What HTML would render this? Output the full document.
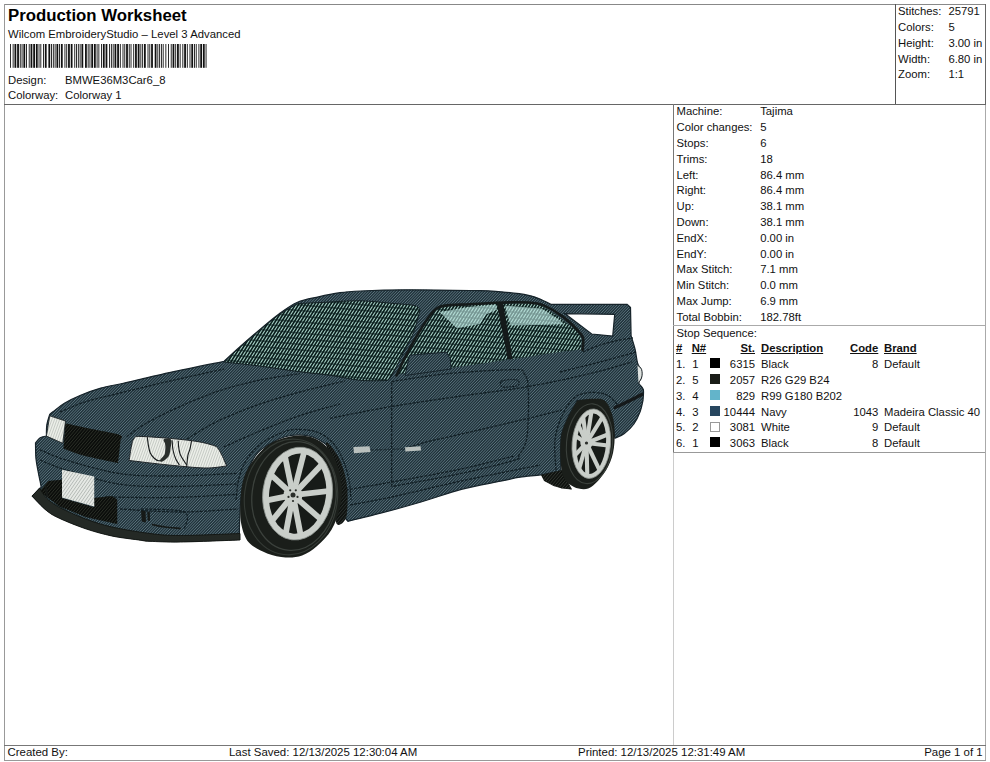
<!DOCTYPE html>
<html lang="en">
<head>
<meta charset="utf-8">
<title>Production Worksheet</title>
<style>
html,body{margin:0;padding:0;background:#fff;}
body{width:990px;height:762px;position:relative;overflow:hidden;font-family:"Liberation Sans",Arial,sans-serif;font-size:11.3px;color:#111;}
.t{position:absolute;white-space:nowrap;line-height:14px;height:14px;}
.r{text-align:right;}
.b{font-weight:bold;text-decoration:underline;}
.ln{position:absolute;background:#777;}
#title{position:absolute;left:8px;top:6.2px;font-weight:bold;font-size:16.8px;line-height:20px;white-space:nowrap;color:#000;}
.sw{position:absolute;width:10px;height:10px;}
</style>
</head>
<body>
<div class="ln" style="left:4px;top:4px;width:982px;height:1px;background:#888"></div>
<div class="ln" style="left:4px;top:4px;width:1px;height:756px;background:#999"></div>
<div class="ln" style="left:985px;top:4px;width:1px;height:100px;background:#666"></div>
<div class="ln" style="left:985px;top:104px;width:1px;height:656px;background:#aaa"></div>
<div class="ln" style="left:4px;top:104px;width:982px;height:1px;background:#666"></div>
<div class="ln" style="left:895px;top:4px;width:1px;height:100px;background:#555"></div>
<div class="ln" style="left:673px;top:104px;width:1px;height:348px;background:#777"></div>
<div class="ln" style="left:673px;top:452px;width:1px;height:293px;background:#ccc"></div>
<div class="ln" style="left:673px;top:325px;width:312px;height:1px;background:#aaa"></div>
<div class="ln" style="left:673px;top:452px;width:312px;height:1px;background:#999"></div>
<div class="ln" style="left:4px;top:745px;width:982px;height:1px;background:#777"></div>
<div class="ln" style="left:4px;top:760px;width:982px;height:1px;background:#999"></div>
<svg width="990" height="110" viewBox="0 0 990 110" style="position:absolute;left:0;top:0"><g fill="#111"><rect x="10.00" y="44" width="0.89" height="23.799999999999997"/><rect x="12.68" y="44" width="0.89" height="23.799999999999997"/><rect x="14.47" y="44" width="1.79" height="23.799999999999997"/><rect x="17.15" y="44" width="1.79" height="23.799999999999997"/><rect x="19.82" y="44" width="0.89" height="23.799999999999997"/><rect x="21.61" y="44" width="0.89" height="23.799999999999997"/><rect x="23.40" y="44" width="1.79" height="23.799999999999997"/><rect x="26.08" y="44" width="0.89" height="23.799999999999997"/><rect x="28.76" y="44" width="0.89" height="23.799999999999997"/><rect x="30.54" y="44" width="1.79" height="23.799999999999997"/><rect x="33.22" y="44" width="1.79" height="23.799999999999997"/><rect x="35.90" y="44" width="1.79" height="23.799999999999997"/><rect x="38.58" y="44" width="0.89" height="23.799999999999997"/><rect x="40.37" y="44" width="0.89" height="23.799999999999997"/><rect x="43.05" y="44" width="0.89" height="23.799999999999997"/><rect x="44.83" y="44" width="1.79" height="23.799999999999997"/><rect x="48.41" y="44" width="1.79" height="23.799999999999997"/><rect x="51.09" y="44" width="0.89" height="23.799999999999997"/><rect x="52.87" y="44" width="0.89" height="23.799999999999997"/><rect x="54.66" y="44" width="0.89" height="23.799999999999997"/><rect x="56.45" y="44" width="1.79" height="23.799999999999997"/><rect x="59.12" y="44" width="0.89" height="23.799999999999997"/><rect x="60.91" y="44" width="1.79" height="23.799999999999997"/><rect x="64.48" y="44" width="0.89" height="23.799999999999997"/><rect x="66.27" y="44" width="0.89" height="23.799999999999997"/><rect x="68.06" y="44" width="1.79" height="23.799999999999997"/><rect x="70.74" y="44" width="1.79" height="23.799999999999997"/><rect x="74.31" y="44" width="0.89" height="23.799999999999997"/><rect x="76.10" y="44" width="0.89" height="23.799999999999997"/><rect x="77.88" y="44" width="0.89" height="23.799999999999997"/><rect x="79.67" y="44" width="0.89" height="23.799999999999997"/><rect x="81.45" y="44" width="1.79" height="23.799999999999997"/><rect x="85.03" y="44" width="1.79" height="23.799999999999997"/><rect x="87.71" y="44" width="0.89" height="23.799999999999997"/><rect x="89.49" y="44" width="0.89" height="23.799999999999997"/><rect x="91.28" y="44" width="1.79" height="23.799999999999997"/><rect x="93.96" y="44" width="1.79" height="23.799999999999997"/><rect x="96.64" y="44" width="0.89" height="23.799999999999997"/><rect x="98.42" y="44" width="0.89" height="23.799999999999997"/><rect x="101.10" y="44" width="0.89" height="23.799999999999997"/><rect x="102.89" y="44" width="1.79" height="23.799999999999997"/><rect x="105.57" y="44" width="1.79" height="23.799999999999997"/><rect x="109.14" y="44" width="0.89" height="23.799999999999997"/><rect x="110.93" y="44" width="0.89" height="23.799999999999997"/><rect x="112.72" y="44" width="0.89" height="23.799999999999997"/><rect x="114.50" y="44" width="1.79" height="23.799999999999997"/><rect x="117.18" y="44" width="1.79" height="23.799999999999997"/><rect x="119.86" y="44" width="0.89" height="23.799999999999997"/><rect x="122.54" y="44" width="0.89" height="23.799999999999997"/><rect x="124.33" y="44" width="0.89" height="23.799999999999997"/><rect x="126.11" y="44" width="1.79" height="23.799999999999997"/><rect x="128.79" y="44" width="0.89" height="23.799999999999997"/><rect x="130.58" y="44" width="0.89" height="23.799999999999997"/><rect x="133.26" y="44" width="0.89" height="23.799999999999997"/><rect x="135.05" y="44" width="1.79" height="23.799999999999997"/><rect x="137.72" y="44" width="1.79" height="23.799999999999997"/><rect x="140.40" y="44" width="0.89" height="23.799999999999997"/><rect x="142.19" y="44" width="0.89" height="23.799999999999997"/><rect x="143.98" y="44" width="1.79" height="23.799999999999997"/><rect x="147.55" y="44" width="0.89" height="23.799999999999997"/><rect x="149.34" y="44" width="0.89" height="23.799999999999997"/><rect x="151.12" y="44" width="1.79" height="23.799999999999997"/><rect x="154.70" y="44" width="1.79" height="23.799999999999997"/><rect x="157.37" y="44" width="0.89" height="23.799999999999997"/><rect x="159.16" y="44" width="0.89" height="23.799999999999997"/><rect x="160.95" y="44" width="0.89" height="23.799999999999997"/><rect x="162.73" y="44" width="0.89" height="23.799999999999997"/><rect x="165.41" y="44" width="0.89" height="23.799999999999997"/><rect x="168.09" y="44" width="0.89" height="23.799999999999997"/><rect x="170.77" y="44" width="0.89" height="23.799999999999997"/><rect x="172.56" y="44" width="1.79" height="23.799999999999997"/><rect x="175.24" y="44" width="0.89" height="23.799999999999997"/><rect x="177.03" y="44" width="1.79" height="23.799999999999997"/><rect x="179.70" y="44" width="0.89" height="23.799999999999997"/><rect x="182.38" y="44" width="0.89" height="23.799999999999997"/><rect x="184.17" y="44" width="1.79" height="23.799999999999997"/><rect x="186.85" y="44" width="0.89" height="23.799999999999997"/><rect x="189.53" y="44" width="0.89" height="23.799999999999997"/><rect x="191.32" y="44" width="1.79" height="23.799999999999997"/><rect x="194.00" y="44" width="0.89" height="23.799999999999997"/><rect x="195.78" y="44" width="0.89" height="23.799999999999997"/><rect x="198.46" y="44" width="0.89" height="23.799999999999997"/><rect x="200.25" y="44" width="1.79" height="23.799999999999997"/><rect x="202.93" y="44" width="1.79" height="23.799999999999997"/><rect x="205.61" y="44" width="0.89" height="23.799999999999997"/></g></svg>
<div id="title">Production Worksheet</div>
<div class="t" style="left:8px;top:26.90px;letter-spacing:0.02px">Wilcom EmbroideryStudio – Level 3 Advanced</div>
<div class="t" style="left:8px;top:72.70px;">Design:</div>
<div class="t" style="left:65px;top:72.70px;">BMWE36M3Car6_8</div>
<div class="t" style="left:8px;top:88.10px;">Colorway:</div>
<div class="t" style="left:65px;top:88.10px;">Colorway 1</div>
<div class="t" style="left:898px;top:4.20px;">Stitches:</div>
<div class="t" style="left:948.4px;top:4.20px;">25791</div>
<div class="t" style="left:898px;top:20.00px;">Colors:</div>
<div class="t" style="left:948.4px;top:20.00px;">5</div>
<div class="t" style="left:898px;top:35.80px;">Height:</div>
<div class="t" style="left:948.4px;top:35.80px;">3.00 in</div>
<div class="t" style="left:898px;top:51.60px;">Width:</div>
<div class="t" style="left:948.4px;top:51.60px;">6.80 in</div>
<div class="t" style="left:898px;top:67.40px;">Zoom:</div>
<div class="t" style="left:948.4px;top:67.40px;">1:1</div>
<div class="t" style="left:676.5px;top:104.30px;">Machine:</div>
<div class="t" style="left:760.2px;top:104.30px;">Tajima</div>
<div class="t" style="left:676.5px;top:120.10px;">Color changes:</div>
<div class="t" style="left:760.2px;top:120.10px;">5</div>
<div class="t" style="left:676.5px;top:135.90px;">Stops:</div>
<div class="t" style="left:760.2px;top:135.90px;">6</div>
<div class="t" style="left:676.5px;top:151.70px;">Trims:</div>
<div class="t" style="left:760.2px;top:151.70px;">18</div>
<div class="t" style="left:676.5px;top:167.50px;">Left:</div>
<div class="t" style="left:760.2px;top:167.50px;">86.4 mm</div>
<div class="t" style="left:676.5px;top:183.30px;">Right:</div>
<div class="t" style="left:760.2px;top:183.30px;">86.4 mm</div>
<div class="t" style="left:676.5px;top:199.10px;">Up:</div>
<div class="t" style="left:760.2px;top:199.10px;">38.1 mm</div>
<div class="t" style="left:676.5px;top:214.90px;">Down:</div>
<div class="t" style="left:760.2px;top:214.90px;">38.1 mm</div>
<div class="t" style="left:676.5px;top:230.70px;">EndX:</div>
<div class="t" style="left:760.2px;top:230.70px;">0.00 in</div>
<div class="t" style="left:676.5px;top:246.50px;">EndY:</div>
<div class="t" style="left:760.2px;top:246.50px;">0.00 in</div>
<div class="t" style="left:676.5px;top:262.30px;">Max Stitch:</div>
<div class="t" style="left:760.2px;top:262.30px;">7.1 mm</div>
<div class="t" style="left:676.5px;top:278.10px;">Min Stitch:</div>
<div class="t" style="left:760.2px;top:278.10px;">0.0 mm</div>
<div class="t" style="left:676.5px;top:293.90px;">Max Jump:</div>
<div class="t" style="left:760.2px;top:293.90px;">6.9 mm</div>
<div class="t" style="left:676.5px;top:309.70px;">Total Bobbin:</div>
<div class="t" style="left:760.2px;top:309.70px;">182.78ft</div>
<div class="t" style="left:676.5px;top:325.50px;">Stop Sequence:</div>
<div class="t b" style="left:676px;top:341.30px;">#</div>
<div class="t b" style="left:691.7px;top:341.30px;">N#</div>
<div class="t r b" style="right:235px;top:341.30px;">St.</div>
<div class="t b" style="left:761px;top:341.30px;">Description</div>
<div class="t r b" style="right:111.70000000000005px;top:341.30px;">Code</div>
<div class="t b" style="left:884px;top:341.30px;">Brand</div>
<div class="t" style="left:676px;top:357.10px;">1.</div>
<div class="t" style="left:692.3px;top:357.10px;">1</div>
<div class="sw" style="left:709.5px;top:358.40px;background:#000000;"></div>
<div class="t r" style="right:235px;top:357.10px;">6315</div>
<div class="t" style="left:761px;top:357.10px;">Black</div>
<div class="t r" style="right:111.70000000000005px;top:357.10px;">8</div>
<div class="t" style="left:884px;top:357.10px;">Default</div>
<div class="t" style="left:676px;top:372.90px;">2.</div>
<div class="t" style="left:692.3px;top:372.90px;">5</div>
<div class="sw" style="left:709.5px;top:374.20px;background:#1a1d18;"></div>
<div class="t r" style="right:235px;top:372.90px;">2057</div>
<div class="t" style="left:761px;top:372.90px;">R26 G29 B24</div>
<div class="t" style="left:676px;top:388.70px;">3.</div>
<div class="t" style="left:692.3px;top:388.70px;">4</div>
<div class="sw" style="left:709.5px;top:390.00px;background:#63b4ca;"></div>
<div class="t r" style="right:235px;top:388.70px;">829</div>
<div class="t" style="left:761px;top:388.70px;">R99 G180 B202</div>
<div class="t" style="left:676px;top:404.50px;">4.</div>
<div class="t" style="left:692.3px;top:404.50px;">3</div>
<div class="sw" style="left:709.5px;top:405.80px;background:#27465f;"></div>
<div class="t r" style="right:235px;top:404.50px;">10444</div>
<div class="t" style="left:761px;top:404.50px;">Navy</div>
<div class="t r" style="right:111.70000000000005px;top:404.50px;">1043</div>
<div class="t" style="left:884px;top:404.50px;">Madeira Classic 40</div>
<div class="t" style="left:676px;top:420.30px;">5.</div>
<div class="t" style="left:692.3px;top:420.30px;">2</div>
<div class="sw" style="left:709.5px;top:421.60px;background:#ffffff;border:1px solid #999;box-sizing:border-box;"></div>
<div class="t r" style="right:235px;top:420.30px;">3081</div>
<div class="t" style="left:761px;top:420.30px;">White</div>
<div class="t r" style="right:111.70000000000005px;top:420.30px;">9</div>
<div class="t" style="left:884px;top:420.30px;">Default</div>
<div class="t" style="left:676px;top:436.10px;">6.</div>
<div class="t" style="left:692.3px;top:436.10px;">1</div>
<div class="sw" style="left:709.5px;top:437.40px;background:#000000;"></div>
<div class="t r" style="right:235px;top:436.10px;">3063</div>
<div class="t" style="left:761px;top:436.10px;">Black</div>
<div class="t r" style="right:111.70000000000005px;top:436.10px;">8</div>
<div class="t" style="left:884px;top:436.10px;">Default</div>
<div class="t" style="left:7.5px;top:745.10px;font-size:11.45px">Created By:</div>
<div class="t" style="left:229px;top:745.10px;font-size:11.45px">Last Saved: 12/13/2025 12:30:04 AM</div>
<div class="t" style="left:578px;top:745.10px;font-size:11.45px">Printed: 12/13/2025 12:31:49 AM</div>
<div class="t r" style="right:7.2999999999999545px;top:745.10px;font-size:11.45px">Page 1 of 1</div>
<svg id="car" width="990" height="762" viewBox="0 0 990 762" style="position:absolute;left:0;top:0">
<g id="body"><clipPath id="c1"><path d="M46.4,436.0C46.5,434.2 46.2,428.6 46.8,425.0C47.3,421.4 49.2,416.2 49.7,414.5C50.3,414.0 50.8,413.4 53.3,411.5C55.8,409.6 59.9,405.9 64.4,403.2C69.0,400.5 74.5,397.7 80.6,395.2C86.7,392.7 94.2,390.0 100.8,388.1C107.4,386.2 114.1,385.3 120.0,384.0C125.9,382.7 127.6,382.2 136.0,380.3C144.4,378.4 155.8,375.5 170.5,372.3C185.2,369.1 215.1,363.2 224.0,361.4C226.6,359.0 233.8,352.2 239.7,347.0C245.6,341.8 252.8,335.5 259.4,330.0C265.9,324.5 272.6,318.6 279.0,314.0C285.4,309.4 290.9,305.2 297.5,302.3C304.1,299.4 311.4,298.4 318.5,296.8C325.6,295.2 333.0,293.7 340.0,292.7C347.0,291.7 349.7,291.5 360.6,291.0C371.6,290.5 387.5,289.9 405.7,289.8C423.9,289.7 455.0,290.2 470.0,290.5C485.0,290.8 485.9,290.5 495.7,291.3C505.4,292.1 520.6,293.8 528.5,295.3C536.4,296.8 539.2,299.0 543.0,300.5C546.8,302.0 549.7,303.8 551.0,304.4C563.7,304.4 614.5,304.4 627.2,304.4C627.8,304.9 630.0,307.0 630.5,307.5C630.6,312.2 631.0,331.2 631.1,336.0C631.8,338.2 633.9,344.4 635.0,349.0C636.1,353.6 636.7,360.1 637.7,363.5C638.7,366.9 640.4,367.1 641.0,369.5C641.6,371.9 641.6,375.8 641.2,378.0C640.8,380.2 638.4,381.1 638.8,383.0C639.1,384.9 642.6,386.5 643.3,389.4C644.0,392.3 643.0,398.6 643.0,400.5C642.5,402.3 641.7,407.6 640.2,411.5C638.7,415.4 636.5,420.3 633.9,424.0C631.3,427.7 627.5,431.1 624.4,433.5C621.2,435.9 616.6,437.4 615.0,438.2C614.4,435.5 612.1,424.7 611.5,422.0C610.9,419.8 609.6,412.2 608.0,409.0C606.4,405.8 604.5,404.0 602.0,402.5C599.5,401.0 597.1,400.3 593.0,400.0C588.9,399.7 579.8,400.4 577.2,400.5C576.9,401.0 577.2,400.7 575.6,403.6C574.0,406.5 570.1,412.6 567.8,417.8C565.4,423.0 562.7,428.2 561.5,435.0C560.3,441.8 560.8,452.7 560.7,458.7C560.6,464.7 561.0,468.9 561.0,471.0C557.7,471.6 547.8,473.8 541.0,474.8C534.2,475.8 526.8,476.1 520.0,477.2C513.2,478.3 510.2,479.2 500.4,481.2C490.6,483.2 474.6,485.8 461.4,489.3C448.2,492.8 434.5,498.0 421.0,502.0C407.5,506.0 392.8,510.0 380.6,513.2C368.4,516.4 353.4,519.9 348.0,521.3C347.5,520.7 345.3,518.3 344.8,517.7C345.1,514.5 346.7,504.8 346.6,498.5C346.6,492.2 345.7,486.1 344.5,480.0C343.3,473.9 341.2,466.4 339.3,461.7C337.4,456.9 335.5,454.6 333.0,451.5C330.5,448.4 327.6,445.4 324.1,443.0C320.6,440.6 316.3,438.2 312.0,436.8C307.7,435.4 302.9,434.8 298.4,434.8C293.9,434.8 289.6,435.4 285.0,436.8C280.4,438.2 275.4,440.6 270.9,443.2C266.4,445.8 261.7,448.5 258.0,452.5C254.3,456.5 251.3,462.1 248.9,467.2C246.5,472.3 244.9,477.2 243.5,483.0C242.1,488.8 241.3,495.0 240.6,502.0C239.9,509.0 239.7,518.8 239.5,525.0C239.3,531.2 239.5,537.1 239.5,539.5C229.7,539.8 195.5,541.3 180.6,541.5C165.7,541.7 157.1,541.1 150.0,540.8C142.9,540.4 144.5,540.3 138.2,539.4C131.8,538.5 120.7,537.4 111.9,535.5C103.2,533.6 94.5,531.2 85.7,528.3C77.0,525.3 66.0,520.9 59.4,517.8C52.8,514.7 50.8,513.5 46.3,509.9C41.8,506.3 34.8,498.4 32.5,496.1C33.7,494.8 38.5,489.5 39.7,488.2C39.9,487.9 41.2,488.8 41.0,486.3C40.8,483.8 39.2,477.6 38.4,473.0C37.6,468.4 36.5,464.0 36.0,459.0C35.5,454.0 35.6,445.7 35.5,443.0C36.3,442.1 38.4,439.0 40.2,437.8C42.0,436.6 45.4,436.3 46.4,436.0Z"/></clipPath><path d="M46.4,436.0C46.5,434.2 46.2,428.6 46.8,425.0C47.3,421.4 49.2,416.2 49.7,414.5C50.3,414.0 50.8,413.4 53.3,411.5C55.8,409.6 59.9,405.9 64.4,403.2C69.0,400.5 74.5,397.7 80.6,395.2C86.7,392.7 94.2,390.0 100.8,388.1C107.4,386.2 114.1,385.3 120.0,384.0C125.9,382.7 127.6,382.2 136.0,380.3C144.4,378.4 155.8,375.5 170.5,372.3C185.2,369.1 215.1,363.2 224.0,361.4C226.6,359.0 233.8,352.2 239.7,347.0C245.6,341.8 252.8,335.5 259.4,330.0C265.9,324.5 272.6,318.6 279.0,314.0C285.4,309.4 290.9,305.2 297.5,302.3C304.1,299.4 311.4,298.4 318.5,296.8C325.6,295.2 333.0,293.7 340.0,292.7C347.0,291.7 349.7,291.5 360.6,291.0C371.6,290.5 387.5,289.9 405.7,289.8C423.9,289.7 455.0,290.2 470.0,290.5C485.0,290.8 485.9,290.5 495.7,291.3C505.4,292.1 520.6,293.8 528.5,295.3C536.4,296.8 539.2,299.0 543.0,300.5C546.8,302.0 549.7,303.8 551.0,304.4C563.7,304.4 614.5,304.4 627.2,304.4C627.8,304.9 630.0,307.0 630.5,307.5C630.6,312.2 631.0,331.2 631.1,336.0C631.8,338.2 633.9,344.4 635.0,349.0C636.1,353.6 636.7,360.1 637.7,363.5C638.7,366.9 640.4,367.1 641.0,369.5C641.6,371.9 641.6,375.8 641.2,378.0C640.8,380.2 638.4,381.1 638.8,383.0C639.1,384.9 642.6,386.5 643.3,389.4C644.0,392.3 643.0,398.6 643.0,400.5C642.5,402.3 641.7,407.6 640.2,411.5C638.7,415.4 636.5,420.3 633.9,424.0C631.3,427.7 627.5,431.1 624.4,433.5C621.2,435.9 616.6,437.4 615.0,438.2C614.4,435.5 612.1,424.7 611.5,422.0C610.9,419.8 609.6,412.2 608.0,409.0C606.4,405.8 604.5,404.0 602.0,402.5C599.5,401.0 597.1,400.3 593.0,400.0C588.9,399.7 579.8,400.4 577.2,400.5C576.9,401.0 577.2,400.7 575.6,403.6C574.0,406.5 570.1,412.6 567.8,417.8C565.4,423.0 562.7,428.2 561.5,435.0C560.3,441.8 560.8,452.7 560.7,458.7C560.6,464.7 561.0,468.9 561.0,471.0C557.7,471.6 547.8,473.8 541.0,474.8C534.2,475.8 526.8,476.1 520.0,477.2C513.2,478.3 510.2,479.2 500.4,481.2C490.6,483.2 474.6,485.8 461.4,489.3C448.2,492.8 434.5,498.0 421.0,502.0C407.5,506.0 392.8,510.0 380.6,513.2C368.4,516.4 353.4,519.9 348.0,521.3C347.5,520.7 345.3,518.3 344.8,517.7C345.1,514.5 346.7,504.8 346.6,498.5C346.6,492.2 345.7,486.1 344.5,480.0C343.3,473.9 341.2,466.4 339.3,461.7C337.4,456.9 335.5,454.6 333.0,451.5C330.5,448.4 327.6,445.4 324.1,443.0C320.6,440.6 316.3,438.2 312.0,436.8C307.7,435.4 302.9,434.8 298.4,434.8C293.9,434.8 289.6,435.4 285.0,436.8C280.4,438.2 275.4,440.6 270.9,443.2C266.4,445.8 261.7,448.5 258.0,452.5C254.3,456.5 251.3,462.1 248.9,467.2C246.5,472.3 244.9,477.2 243.5,483.0C242.1,488.8 241.3,495.0 240.6,502.0C239.9,509.0 239.7,518.8 239.5,525.0C239.3,531.2 239.5,537.1 239.5,539.5C229.7,539.8 195.5,541.3 180.6,541.5C165.7,541.7 157.1,541.1 150.0,540.8C142.9,540.4 144.5,540.3 138.2,539.4C131.8,538.5 120.7,537.4 111.9,535.5C103.2,533.6 94.5,531.2 85.7,528.3C77.0,525.3 66.0,520.9 59.4,517.8C52.8,514.7 50.8,513.5 46.3,509.9C41.8,506.3 34.8,498.4 32.5,496.1C33.7,494.8 38.5,489.5 39.7,488.2C39.9,487.9 41.2,488.8 41.0,486.3C40.8,483.8 39.2,477.6 38.4,473.0C37.6,468.4 36.5,464.0 36.0,459.0C35.5,454.0 35.6,445.7 35.5,443.0C36.3,442.1 38.4,439.0 40.2,437.8C42.0,436.6 45.4,436.3 46.4,436.0Z" fill="#21333b"/><g clip-path="url(#c1)"><path d="M30.5,290.6L33.2,287.8M30.5,293.5L36.0,287.8M30.5,296.3L38.8,287.8M30.5,299.2L41.5,287.8M30.5,302.1L44.3,287.8M30.5,305.0L47.1,287.8M30.5,307.9L49.9,287.8M30.5,310.7L52.7,287.8M30.5,313.6L55.4,287.8M30.5,316.5L58.2,287.8M30.5,319.4L61.0,287.8M30.5,322.3L63.8,287.8M30.5,325.1L66.6,287.8M30.5,328.0L69.3,287.8M30.5,330.9L72.1,287.8M30.5,333.8L74.9,287.8M30.5,336.7L77.7,287.8M30.5,339.5L80.5,287.8M30.5,342.4L83.2,287.8M30.5,345.3L86.0,287.8M30.5,348.2L88.8,287.8M30.5,351.0L91.6,287.8M30.5,353.9L94.4,287.8M30.5,356.8L97.1,287.8M30.5,359.7L99.9,287.8M30.5,362.6L102.7,287.8M30.5,365.4L105.5,287.8M30.5,368.3L108.3,287.8M30.5,371.2L111.0,287.8M30.5,374.1L113.8,287.8M30.5,377.0L116.6,287.8M30.5,379.8L119.4,287.8M30.5,382.7L122.2,287.8M30.5,385.6L124.9,287.8M30.5,388.5L127.7,287.8M30.5,391.4L130.5,287.8M30.5,394.2L133.3,287.8M30.5,397.1L136.1,287.8M30.5,400.0L138.8,287.8M30.5,402.9L141.6,287.8M30.5,405.8L144.4,287.8M30.5,408.6L147.2,287.8M30.5,411.5L150.0,287.8M30.5,414.4L152.7,287.8M30.5,417.3L155.5,287.8M30.5,420.1L158.3,287.8M30.5,423.0L161.1,287.8M30.5,425.9L163.9,287.8M30.5,428.8L166.6,287.8M30.5,431.7L169.4,287.8M30.5,434.5L172.2,287.8M30.5,437.4L175.0,287.8M30.5,440.3L177.8,287.8M30.5,443.2L180.6,287.8M30.5,446.1L183.3,287.8M30.5,448.9L186.1,287.8M30.5,451.8L188.9,287.8M30.5,454.7L191.7,287.8M30.5,457.6L194.5,287.8M30.5,460.5L197.2,287.8M30.5,463.3L200.0,287.8M30.5,466.2L202.8,287.8M30.5,469.1L205.6,287.8M30.5,472.0L208.4,287.8M30.5,474.9L211.1,287.8M30.5,477.7L213.9,287.8M30.5,480.6L216.7,287.8M30.5,483.5L219.5,287.8M30.5,486.4L222.3,287.8M30.5,489.2L225.0,287.8M30.5,492.1L227.8,287.8M30.5,495.0L230.6,287.8M30.5,497.9L233.4,287.8M30.5,500.8L236.2,287.8M30.5,503.6L238.9,287.8M30.5,506.5L241.7,287.8M30.5,509.4L244.5,287.8M30.5,512.3L247.3,287.8M30.5,515.2L250.1,287.8M30.5,518.0L252.8,287.8M30.5,520.9L255.6,287.8M30.5,523.8L258.4,287.8M30.5,526.7L261.2,287.8M30.5,529.6L264.0,287.8M30.5,532.4L266.7,287.8M30.5,535.3L269.5,287.8M30.5,538.2L272.3,287.8M30.5,541.1L275.1,287.8M30.9,543.5L277.9,287.8M33.7,543.5L280.6,287.8M36.5,543.5L283.4,287.8M39.3,543.5L286.2,287.8M42.1,543.5L289.0,287.8M44.8,543.5L291.8,287.8M47.6,543.5L294.5,287.8M50.4,543.5L297.3,287.8M53.2,543.5L300.1,287.8M56.0,543.5L302.9,287.8M58.7,543.5L305.7,287.8M61.5,543.5L308.4,287.8M64.3,543.5L311.2,287.8M67.1,543.5L314.0,287.8M69.9,543.5L316.8,287.8M72.6,543.5L319.6,287.8M75.4,543.5L322.3,287.8M78.2,543.5L325.1,287.8M81.0,543.5L327.9,287.8M83.8,543.5L330.7,287.8M86.5,543.5L333.5,287.8M89.3,543.5L336.2,287.8M92.1,543.5L339.0,287.8M94.9,543.5L341.8,287.8M97.7,543.5L344.6,287.8M100.4,543.5L347.4,287.8M103.2,543.5L350.2,287.8M106.0,543.5L352.9,287.8M108.8,543.5L355.7,287.8M111.6,543.5L358.5,287.8M114.3,543.5L361.3,287.8M117.1,543.5L364.1,287.8M119.9,543.5L366.8,287.8M122.7,543.5L369.6,287.8M125.5,543.5L372.4,287.8M128.2,543.5L375.2,287.8M131.0,543.5L378.0,287.8M133.8,543.5L380.7,287.8M136.6,543.5L383.5,287.8M139.4,543.5L386.3,287.8M142.1,543.5L389.1,287.8M144.9,543.5L391.9,287.8M147.7,543.5L394.6,287.8M150.5,543.5L397.4,287.8M153.3,543.5L400.2,287.8M156.0,543.5L403.0,287.8M158.8,543.5L405.8,287.8M161.6,543.5L408.5,287.8M164.4,543.5L411.3,287.8M167.2,543.5L414.1,287.8M170.0,543.5L416.9,287.8M172.7,543.5L419.7,287.8M175.5,543.5L422.4,287.8M178.3,543.5L425.2,287.8M181.1,543.5L428.0,287.8M183.9,543.5L430.8,287.8M186.6,543.5L433.6,287.8M189.4,543.5L436.3,287.8M192.2,543.5L439.1,287.8M195.0,543.5L441.9,287.8M197.8,543.5L444.7,287.8M200.5,543.5L447.5,287.8M203.3,543.5L450.2,287.8M206.1,543.5L453.0,287.8M208.9,543.5L455.8,287.8M211.7,543.5L458.6,287.8M214.4,543.5L461.4,287.8M217.2,543.5L464.1,287.8M220.0,543.5L466.9,287.8M222.8,543.5L469.7,287.8M225.6,543.5L472.5,287.8M228.3,543.5L475.3,287.8M231.1,543.5L478.0,287.8M233.9,543.5L480.8,287.8M236.7,543.5L483.6,287.8M239.5,543.5L486.4,287.8M242.2,543.5L489.2,287.8M245.0,543.5L491.9,287.8M247.8,543.5L494.7,287.8M250.6,543.5L497.5,287.8M253.4,543.5L500.3,287.8M256.1,543.5L503.1,287.8M258.9,543.5L505.8,287.8M261.7,543.5L508.6,287.8M264.5,543.5L511.4,287.8M267.3,543.5L514.2,287.8M270.0,543.5L517.0,287.8M272.8,543.5L519.8,287.8M275.6,543.5L522.5,287.8M278.4,543.5L525.3,287.8M281.2,543.5L528.1,287.8M283.9,543.5L530.9,287.8M286.7,543.5L533.7,287.8M289.5,543.5L536.4,287.8M292.3,543.5L539.2,287.8M295.1,543.5L542.0,287.8M297.8,543.5L544.8,287.8M300.6,543.5L547.6,287.8M303.4,543.5L550.3,287.8M306.2,543.5L553.1,287.8M309.0,543.5L555.9,287.8M311.7,543.5L558.7,287.8M314.5,543.5L561.5,287.8M317.3,543.5L564.2,287.8M320.1,543.5L567.0,287.8M322.9,543.5L569.8,287.8M325.6,543.5L572.6,287.8M328.4,543.5L575.4,287.8M331.2,543.5L578.1,287.8M334.0,543.5L580.9,287.8M336.8,543.5L583.7,287.8M339.6,543.5L586.5,287.8M342.3,543.5L589.3,287.8M345.1,543.5L592.0,287.8M347.9,543.5L594.8,287.8M350.7,543.5L597.6,287.8M353.5,543.5L600.4,287.8M356.2,543.5L603.2,287.8M359.0,543.5L605.9,287.8M361.8,543.5L608.7,287.8M364.6,543.5L611.5,287.8M367.4,543.5L614.3,287.8M370.1,543.5L617.1,287.8M372.9,543.5L619.8,287.8M375.7,543.5L622.6,287.8M378.5,543.5L625.4,287.8M381.3,543.5L628.2,287.8M384.0,543.5L631.0,287.8M386.8,543.5L633.7,287.8M389.6,543.5L636.5,287.8M392.4,543.5L639.3,287.8M395.2,543.5L642.1,287.8M397.9,543.5L644.9,287.8M400.7,543.5L645.3,290.2M403.5,543.5L645.3,293.1M406.3,543.5L645.3,296.0M409.1,543.5L645.3,298.9M411.8,543.5L645.3,301.7M414.6,543.5L645.3,304.6M417.4,543.5L645.3,307.5M420.2,543.5L645.3,310.4M423.0,543.5L645.3,313.3M425.7,543.5L645.3,316.1M428.5,543.5L645.3,319.0M431.3,543.5L645.3,321.9M434.1,543.5L645.3,324.8M436.9,543.5L645.3,327.7M439.6,543.5L645.3,330.5M442.4,543.5L645.3,333.4M445.2,543.5L645.3,336.3M448.0,543.5L645.3,339.2M450.8,543.5L645.3,342.1M453.5,543.5L645.3,344.9M456.3,543.5L645.3,347.8M459.1,543.5L645.3,350.7M461.9,543.5L645.3,353.6M464.7,543.5L645.3,356.4M467.4,543.5L645.3,359.3M470.2,543.5L645.3,362.2M473.0,543.5L645.3,365.1M475.8,543.5L645.3,368.0M478.6,543.5L645.3,370.8M481.3,543.5L645.3,373.7M484.1,543.5L645.3,376.6M486.9,543.5L645.3,379.5M489.7,543.5L645.3,382.4M492.5,543.5L645.3,385.2M495.2,543.5L645.3,388.1M498.0,543.5L645.3,391.0M500.8,543.5L645.3,393.9M503.6,543.5L645.3,396.8M506.4,543.5L645.3,399.6M509.2,543.5L645.3,402.5M511.9,543.5L645.3,405.4M514.7,543.5L645.3,408.3M517.5,543.5L645.3,411.2M520.3,543.5L645.3,414.0M523.1,543.5L645.3,416.9M525.8,543.5L645.3,419.8M528.6,543.5L645.3,422.7M531.4,543.5L645.3,425.5M534.2,543.5L645.3,428.4M537.0,543.5L645.3,431.3M539.7,543.5L645.3,434.2M542.5,543.5L645.3,437.1M545.3,543.5L645.3,439.9M548.1,543.5L645.3,442.8M550.9,543.5L645.3,445.7M553.6,543.5L645.3,448.6M556.4,543.5L645.3,451.5M559.2,543.5L645.3,454.3M562.0,543.5L645.3,457.2M564.8,543.5L645.3,460.1M567.5,543.5L645.3,463.0M570.3,543.5L645.3,465.9M573.1,543.5L645.3,468.7M575.9,543.5L645.3,471.6M578.7,543.5L645.3,474.5M581.4,543.5L645.3,477.4M584.2,543.5L645.3,480.3M587.0,543.5L645.3,483.1M589.8,543.5L645.3,486.0M592.6,543.5L645.3,488.9M595.3,543.5L645.3,491.8M598.1,543.5L645.3,494.6M600.9,543.5L645.3,497.5M603.7,543.5L645.3,500.4M606.5,543.5L645.3,503.3M609.2,543.5L645.3,506.2M612.0,543.5L645.3,509.0M614.8,543.5L645.3,511.9M617.6,543.5L645.3,514.8M620.4,543.5L645.3,517.7M623.1,543.5L645.3,520.6M625.9,543.5L645.3,523.4M628.7,543.5L645.3,526.3M631.5,543.5L645.3,529.2M634.3,543.5L645.3,532.1M637.0,543.5L645.3,535.0M639.8,543.5L645.3,537.8M642.6,543.5L645.3,540.7" fill="none" stroke="#5b737d" stroke-width="1.0" opacity="1"/></g><path d="M46.4,436.0C46.5,434.2 46.2,428.6 46.8,425.0C47.3,421.4 49.2,416.2 49.7,414.5C50.3,414.0 50.8,413.4 53.3,411.5C55.8,409.6 59.9,405.9 64.4,403.2C69.0,400.5 74.5,397.7 80.6,395.2C86.7,392.7 94.2,390.0 100.8,388.1C107.4,386.2 114.1,385.3 120.0,384.0C125.9,382.7 127.6,382.2 136.0,380.3C144.4,378.4 155.8,375.5 170.5,372.3C185.2,369.1 215.1,363.2 224.0,361.4C226.6,359.0 233.8,352.2 239.7,347.0C245.6,341.8 252.8,335.5 259.4,330.0C265.9,324.5 272.6,318.6 279.0,314.0C285.4,309.4 290.9,305.2 297.5,302.3C304.1,299.4 311.4,298.4 318.5,296.8C325.6,295.2 333.0,293.7 340.0,292.7C347.0,291.7 349.7,291.5 360.6,291.0C371.6,290.5 387.5,289.9 405.7,289.8C423.9,289.7 455.0,290.2 470.0,290.5C485.0,290.8 485.9,290.5 495.7,291.3C505.4,292.1 520.6,293.8 528.5,295.3C536.4,296.8 539.2,299.0 543.0,300.5C546.8,302.0 549.7,303.8 551.0,304.4C563.7,304.4 614.5,304.4 627.2,304.4C627.8,304.9 630.0,307.0 630.5,307.5C630.6,312.2 631.0,331.2 631.1,336.0C631.8,338.2 633.9,344.4 635.0,349.0C636.1,353.6 636.7,360.1 637.7,363.5C638.7,366.9 640.4,367.1 641.0,369.5C641.6,371.9 641.6,375.8 641.2,378.0C640.8,380.2 638.4,381.1 638.8,383.0C639.1,384.9 642.6,386.5 643.3,389.4C644.0,392.3 643.0,398.6 643.0,400.5C642.5,402.3 641.7,407.6 640.2,411.5C638.7,415.4 636.5,420.3 633.9,424.0C631.3,427.7 627.5,431.1 624.4,433.5C621.2,435.9 616.6,437.4 615.0,438.2C614.4,435.5 612.1,424.7 611.5,422.0C610.9,419.8 609.6,412.2 608.0,409.0C606.4,405.8 604.5,404.0 602.0,402.5C599.5,401.0 597.1,400.3 593.0,400.0C588.9,399.7 579.8,400.4 577.2,400.5C576.9,401.0 577.2,400.7 575.6,403.6C574.0,406.5 570.1,412.6 567.8,417.8C565.4,423.0 562.7,428.2 561.5,435.0C560.3,441.8 560.8,452.7 560.7,458.7C560.6,464.7 561.0,468.9 561.0,471.0C557.7,471.6 547.8,473.8 541.0,474.8C534.2,475.8 526.8,476.1 520.0,477.2C513.2,478.3 510.2,479.2 500.4,481.2C490.6,483.2 474.6,485.8 461.4,489.3C448.2,492.8 434.5,498.0 421.0,502.0C407.5,506.0 392.8,510.0 380.6,513.2C368.4,516.4 353.4,519.9 348.0,521.3C347.5,520.7 345.3,518.3 344.8,517.7C345.1,514.5 346.7,504.8 346.6,498.5C346.6,492.2 345.7,486.1 344.5,480.0C343.3,473.9 341.2,466.4 339.3,461.7C337.4,456.9 335.5,454.6 333.0,451.5C330.5,448.4 327.6,445.4 324.1,443.0C320.6,440.6 316.3,438.2 312.0,436.8C307.7,435.4 302.9,434.8 298.4,434.8C293.9,434.8 289.6,435.4 285.0,436.8C280.4,438.2 275.4,440.6 270.9,443.2C266.4,445.8 261.7,448.5 258.0,452.5C254.3,456.5 251.3,462.1 248.9,467.2C246.5,472.3 244.9,477.2 243.5,483.0C242.1,488.8 241.3,495.0 240.6,502.0C239.9,509.0 239.7,518.8 239.5,525.0C239.3,531.2 239.5,537.1 239.5,539.5C229.7,539.8 195.5,541.3 180.6,541.5C165.7,541.7 157.1,541.1 150.0,540.8C142.9,540.4 144.5,540.3 138.2,539.4C131.8,538.5 120.7,537.4 111.9,535.5C103.2,533.6 94.5,531.2 85.7,528.3C77.0,525.3 66.0,520.9 59.4,517.8C52.8,514.7 50.8,513.5 46.3,509.9C41.8,506.3 34.8,498.4 32.5,496.1C33.7,494.8 38.5,489.5 39.7,488.2C39.9,487.9 41.2,488.8 41.0,486.3C40.8,483.8 39.2,477.6 38.4,473.0C37.6,468.4 36.5,464.0 36.0,459.0C35.5,454.0 35.6,445.7 35.5,443.0C36.3,442.1 38.4,439.0 40.2,437.8C42.0,436.6 45.4,436.3 46.4,436.0Z" fill="none" stroke="#16232a" stroke-width="1.2"/></g>
<path d="M564.8,313.6L614.7,314.3L612.7,336.0L591.7,334.0Z" fill="#fff" stroke="#16232a" stroke-width="1.2"/>
<g id="stitch-lines">
<path d="M126.7,436.7C129.8,434.6 138.4,427.9 145.0,424.0C151.6,420.1 157.7,417.0 166.0,413.0C174.3,409.0 185.4,403.9 195.0,400.0C204.6,396.1 213.0,392.7 223.8,389.4C234.6,386.1 247.3,382.6 260.0,380.0C272.7,377.4 293.3,374.7 300.0,373.6" fill="none" stroke="#101c22" stroke-width="1.3" stroke-dasharray="3 1.2" opacity="0.95"/>
<path d="M187.0,439.0C190.0,437.2 198.9,431.4 205.0,428.0C211.1,424.6 214.6,422.3 223.8,418.3C233.0,414.3 247.3,408.4 260.0,404.0C272.7,399.6 285.8,395.8 300.0,392.0C314.2,388.2 337.5,382.8 345.0,381.0" fill="none" stroke="#101c22" stroke-width="1.3" stroke-dasharray="3 1.2" opacity="0.95"/>
<path d="M223.8,447.0C229.8,444.3 247.3,436.2 260.0,431.0C272.7,425.8 286.7,420.1 300.0,415.6C313.3,411.1 333.3,405.9 340.0,404.0" fill="none" stroke="#101c22" stroke-width="1.3" stroke-dasharray="3 1.2" opacity="0.95"/>
<path d="M60.0,412.0C64.2,410.3 75.0,405.2 85.0,402.0C95.0,398.8 105.8,396.5 120.0,393.0C134.2,389.5 152.7,385.0 170.0,381.0C187.3,377.0 215.0,371.0 224.0,369.0" fill="none" stroke="#101c22" stroke-width="1.3" stroke-dasharray="3 1.2" opacity="0.95"/>
<path d="M40.0,449.8C44.3,451.5 52.9,456.1 66.0,460.0C79.1,463.9 101.2,470.7 118.8,473.4C136.3,476.1 151.6,476.0 171.3,476.0C191.0,476.0 226.1,473.8 237.0,473.4" fill="none" stroke="#101c22" stroke-width="1.3" stroke-dasharray="3 1.2" opacity="0.95"/>
<path d="M40.0,460.0C44.3,461.7 52.9,466.0 66.0,470.0C79.1,474.0 101.2,481.2 118.8,484.0C136.3,486.8 151.6,486.5 171.3,486.5C191.0,486.5 226.1,484.4 237.0,484.0" fill="none" stroke="#101c22" stroke-width="1.3" stroke-dasharray="3 1.2" opacity="0.95"/>
<path d="M105.6,497.0C116.5,497.1 149.4,497.9 171.3,497.5C193.2,497.1 226.1,494.9 237.0,494.4" fill="none" stroke="#101c22" stroke-width="1.3" stroke-dasharray="3 1.2" opacity="0.95"/>
<path d="M120.0,509.0C130.0,509.5 160.3,512.0 180.0,512.0C199.7,512.0 228.3,509.5 238.0,509.0" fill="none" stroke="#101c22" stroke-width="1.3" stroke-dasharray="3 1.2" opacity="0.95"/>
<path d="M391.7,486.6C391.7,478.8 391.7,457.5 391.7,440.0C391.7,422.5 391.7,391.2 391.7,381.5C401.1,380.2 427.9,375.6 448.2,373.6C468.5,371.6 501.1,369.7 513.8,369.7C526.5,369.7 521.9,370.3 524.3,373.6C526.7,376.9 527.8,378.9 528.3,389.4C528.8,399.9 528.5,425.8 527.0,436.7C525.5,447.6 521.2,451.1 519.0,455.0C516.8,458.9 523.4,457.2 513.8,460.3C504.2,463.4 481.6,469.0 461.3,473.4C441.0,477.8 403.3,484.4 391.7,486.6" fill="none" stroke="#101c22" stroke-width="1.3" stroke-dasharray="3 1.2" opacity="0.95"/>
<path d="M330.0,418.3C340.3,416.3 369.8,410.2 391.7,406.5C413.6,402.8 438.8,399.3 461.3,396.0C483.9,392.7 505.6,390.5 527.0,386.8C548.5,383.1 572.5,377.7 590.0,373.6C607.5,369.5 625.0,363.9 632.0,362.0" fill="none" stroke="#101c22" stroke-width="1.3" stroke-dasharray="3 1.2" opacity="0.95"/>
<path d="M405.0,449.0C408.1,447.9 412.6,445.6 423.6,442.7C434.6,439.8 454.0,435.8 471.0,431.8C488.0,427.9 510.3,422.6 525.5,419.0C540.7,415.4 555.9,411.5 562.0,410.0" fill="none" stroke="#101c22" stroke-width="1.3" stroke-dasharray="3 1.2" opacity="0.95"/>
<path d="M371.0,450.0C374.5,449.9 386.3,449.5 392.0,449.3C397.7,449.1 402.8,449.1 405.0,449.0" fill="none" stroke="#101c22" stroke-width="1.3" stroke-dasharray="3 1.2" opacity="0.6"/>
<path d="M345.8,490.0C353.4,488.7 372.4,485.5 391.7,482.0C410.9,478.5 441.0,473.3 461.3,469.0C481.6,464.7 505.0,458.2 513.8,456.0" fill="none" stroke="#101c22" stroke-width="1.3" stroke-dasharray="3 1.2" opacity="0.95"/>
<path d="M350.0,505.0C356.9,503.7 373.1,501.0 391.7,497.0C410.2,493.0 436.6,486.3 461.3,481.0C486.0,475.7 526.9,467.7 540.0,465.0" fill="none" stroke="#101c22" stroke-width="1.3" stroke-dasharray="3 1.2" opacity="0.95"/>
<path d="M556.0,470.0C555.8,465.0 554.0,449.0 555.0,440.0C556.0,431.0 558.8,423.0 562.0,416.0C565.2,409.0 569.3,401.9 574.0,398.0C578.7,394.1 584.5,393.0 590.0,392.5C595.5,392.0 602.5,393.1 607.0,395.0C611.5,396.9 615.3,402.5 617.0,404.0" fill="none" stroke="#101c22" stroke-width="1.3" stroke-dasharray="3 1.2" opacity="0.95"/>
<path d="M236.0,500.0C236.5,496.3 237.2,484.8 239.0,478.0C240.8,471.2 243.2,464.8 247.0,459.0C250.8,453.2 255.7,447.6 262.0,443.0C268.3,438.4 278.7,433.8 285.0,431.5C291.3,429.2 294.5,429.3 300.0,429.5C305.5,429.7 312.5,430.2 318.0,432.5C323.5,434.8 328.8,438.4 333.0,443.0C337.2,447.6 340.3,453.8 343.0,460.0C345.7,466.2 347.7,473.3 349.0,480.0C350.3,486.7 350.7,496.7 351.0,500.0" fill="none" stroke="#101c22" stroke-width="1.3" stroke-dasharray="3 1.2" opacity="0.95"/>
<path d="M583.0,352.0C585.8,350.8 593.8,347.0 600.0,345.0C606.2,343.0 614.5,341.2 620.0,340.0C625.5,338.8 630.8,338.3 633.0,338.0" fill="none" stroke="#101c22" stroke-width="1.3" stroke-dasharray="3 1.2" opacity="0.95"/>
<path d="M560.0,372.0C566.7,370.3 587.3,365.3 600.0,362.0C612.7,358.7 630.0,353.7 636.0,352.0" fill="none" stroke="#101c22" stroke-width="1.3" stroke-dasharray="3 1.2" opacity="0.95"/>
<path d="M141.0,509.0C148.2,509.5 177.2,508.7 184.4,512.0C191.6,515.3 184.4,525.8 184.4,528.6" fill="none" stroke="#101c22" stroke-width="1.3" stroke-dasharray="3 1.2" opacity="0.95"/>
</g>
<g id="windows">
<clipPath id="c2"><path d="M224.5,362.0C227.0,359.6 233.9,352.8 239.7,347.6C245.5,342.4 252.8,336.1 259.4,330.6C265.9,325.1 272.6,319.3 279.0,314.8C285.4,310.3 294.4,305.5 297.5,303.6C302.1,303.4 314.6,302.8 325.0,302.3C335.4,301.8 348.8,300.6 360.0,300.8C371.2,301.0 383.4,302.6 392.5,303.4C401.6,304.2 410.3,304.5 414.9,305.6C419.5,306.7 419.1,309.4 420.0,310.2C418.9,313.9 416.3,325.3 413.5,332.5C410.7,339.7 406.5,346.5 403.0,353.5C399.5,360.5 395.0,370.0 392.5,374.5C390.0,379.0 388.8,379.5 388.0,380.5C383.4,380.5 370.3,381.2 360.6,380.3C350.9,379.4 340.3,376.8 330.0,375.3C319.7,373.9 310.6,373.2 298.8,371.6C287.0,370.1 271.8,367.6 259.4,366.0C247.0,364.4 230.3,362.7 224.5,362.0Z"/></clipPath><path d="M224.5,362.0C227.0,359.6 233.9,352.8 239.7,347.6C245.5,342.4 252.8,336.1 259.4,330.6C265.9,325.1 272.6,319.3 279.0,314.8C285.4,310.3 294.4,305.5 297.5,303.6C302.1,303.4 314.6,302.8 325.0,302.3C335.4,301.8 348.8,300.6 360.0,300.8C371.2,301.0 383.4,302.6 392.5,303.4C401.6,304.2 410.3,304.5 414.9,305.6C419.5,306.7 419.1,309.4 420.0,310.2C418.9,313.9 416.3,325.3 413.5,332.5C410.7,339.7 406.5,346.5 403.0,353.5C399.5,360.5 395.0,370.0 392.5,374.5C390.0,379.0 388.8,379.5 388.0,380.5C383.4,380.5 370.3,381.2 360.6,380.3C350.9,379.4 340.3,376.8 330.0,375.3C319.7,373.9 310.6,373.2 298.8,371.6C287.0,370.1 271.8,367.6 259.4,366.0C247.0,364.4 230.3,362.7 224.5,362.0Z" fill="#081a1a"/><g clip-path="url(#c2)"><path d="M222.5,301.6L224.2,298.8M222.5,306.7L227.4,298.8M222.5,311.8L230.6,298.8M222.5,316.9L233.8,298.8M222.5,322.0L237.0,298.8M222.5,327.0L240.2,298.8M222.5,332.1L243.3,298.8M222.5,337.2L246.5,298.8M222.5,342.3L249.7,298.8M222.5,347.4L252.9,298.8M222.5,352.5L256.1,298.8M222.5,357.6L259.3,298.8M222.5,362.7L262.4,298.8M222.5,367.8L265.6,298.8M222.5,372.9L268.8,298.8M222.5,378.0L272.0,298.8M222.9,382.5L275.2,298.8M226.1,382.5L278.4,298.8M229.2,382.5L281.5,298.8M232.4,382.5L284.7,298.8M235.6,382.5L287.9,298.8M238.8,382.5L291.1,298.8M242.0,382.5L294.3,298.8M245.2,382.5L297.5,298.8M248.3,382.5L300.6,298.8M251.5,382.5L303.8,298.8M254.7,382.5L307.0,298.8M257.9,382.5L310.2,298.8M261.1,382.5L313.4,298.8M264.3,382.5L316.6,298.8M267.4,382.5L319.7,298.8M270.6,382.5L322.9,298.8M273.8,382.5L326.1,298.8M277.0,382.5L329.3,298.8M280.2,382.5L332.5,298.8M283.4,382.5L335.7,298.8M286.5,382.5L338.8,298.8M289.7,382.5L342.0,298.8M292.9,382.5L345.2,298.8M296.1,382.5L348.4,298.8M299.3,382.5L351.6,298.8M302.5,382.5L354.8,298.8M305.7,382.5L358.0,298.8M308.8,382.5L361.1,298.8M312.0,382.5L364.3,298.8M315.2,382.5L367.5,298.8M318.4,382.5L370.7,298.8M321.6,382.5L373.9,298.8M324.8,382.5L377.1,298.8M327.9,382.5L380.2,298.8M331.1,382.5L383.4,298.8M334.3,382.5L386.6,298.8M337.5,382.5L389.8,298.8M340.7,382.5L393.0,298.8M343.9,382.5L396.2,298.8M347.0,382.5L399.3,298.8M350.2,382.5L402.5,298.8M353.4,382.5L405.7,298.8M356.6,382.5L408.9,298.8M359.8,382.5L412.1,298.8M363.0,382.5L415.3,298.8M366.1,382.5L418.4,298.8M369.3,382.5L421.6,298.8M372.5,382.5L422.0,303.3M375.7,382.5L422.0,308.4M378.9,382.5L422.0,313.5M382.1,382.5L422.0,318.6M385.2,382.5L422.0,323.7M388.4,382.5L422.0,328.8M391.6,382.5L422.0,333.9M394.8,382.5L422.0,339.0M398.0,382.5L422.0,344.1M401.2,382.5L422.0,349.2M404.3,382.5L422.0,354.3M407.5,382.5L422.0,359.3M410.7,382.5L422.0,364.4M413.9,382.5L422.0,369.5M417.1,382.5L422.0,374.6M420.3,382.5L422.0,379.7" fill="none" stroke="#a3cdc2" stroke-width="1.12" opacity="1"/><path d="M357.9,298.8L422.0,304.4M293.7,298.8L422.0,310.0M229.4,298.8L422.0,315.6M222.5,303.8L422.0,321.3M222.5,309.4L422.0,326.9M222.5,315.1L422.0,332.5M222.5,320.7L422.0,338.1M222.5,326.3L422.0,343.8M222.5,331.9L422.0,349.4M222.5,337.5L422.0,355.0M222.5,343.2L422.0,360.6M222.5,348.8L422.0,366.2M222.5,354.4L422.0,371.9M222.5,360.0L422.0,377.5M222.5,365.7L415.1,382.5M222.5,371.3L350.8,382.5M222.5,376.9L286.6,382.5" fill="none" stroke="#081a1a" stroke-width="1.6" opacity="0.6"/></g><path d="M224.5,362.0C227.0,359.6 233.9,352.8 239.7,347.6C245.5,342.4 252.8,336.1 259.4,330.6C265.9,325.1 272.6,319.3 279.0,314.8C285.4,310.3 294.4,305.5 297.5,303.6C302.1,303.4 314.6,302.8 325.0,302.3C335.4,301.8 348.8,300.6 360.0,300.8C371.2,301.0 383.4,302.6 392.5,303.4C401.6,304.2 410.3,304.5 414.9,305.6C419.5,306.7 419.1,309.4 420.0,310.2C418.9,313.9 416.3,325.3 413.5,332.5C410.7,339.7 406.5,346.5 403.0,353.5C399.5,360.5 395.0,370.0 392.5,374.5C390.0,379.0 388.8,379.5 388.0,380.5C383.4,380.5 370.3,381.2 360.6,380.3C350.9,379.4 340.3,376.8 330.0,375.3C319.7,373.9 310.6,373.2 298.8,371.6C287.0,370.1 271.8,367.6 259.4,366.0C247.0,364.4 230.3,362.7 224.5,362.0Z" fill="none" stroke="#132024" stroke-width="1"/>
<clipPath id="c3"><path d="M398.0,374.0C399.1,371.5 401.7,364.2 404.3,358.8C406.9,353.4 410.0,347.8 413.5,341.7C417.0,335.6 421.9,327.1 425.4,322.0C428.9,316.9 431.3,313.4 434.6,310.8C437.9,308.2 439.1,307.4 445.0,306.5C450.9,305.6 461.3,305.7 470.0,305.2C478.7,304.7 492.5,303.9 497.0,303.6C498.0,307.2 500.8,315.8 503.0,325.0C505.2,334.2 509.2,353.2 510.5,358.8C505.8,359.6 492.4,362.0 482.5,363.5C472.6,365.0 456.2,367.1 451.0,367.8C442.2,368.8 406.8,373.0 398.0,374.0Z"/></clipPath><path d="M398.0,374.0C399.1,371.5 401.7,364.2 404.3,358.8C406.9,353.4 410.0,347.8 413.5,341.7C417.0,335.6 421.9,327.1 425.4,322.0C428.9,316.9 431.3,313.4 434.6,310.8C437.9,308.2 439.1,307.4 445.0,306.5C450.9,305.6 461.3,305.7 470.0,305.2C478.7,304.7 492.5,303.9 497.0,303.6C498.0,307.2 500.8,315.8 503.0,325.0C505.2,334.2 509.2,353.2 510.5,358.8C505.8,359.6 492.4,362.0 482.5,363.5C472.6,365.0 456.2,367.1 451.0,367.8C442.2,368.8 406.8,373.0 398.0,374.0Z" fill="#081a1a"/><g clip-path="url(#c3)"><path d="M396.0,304.6L397.9,301.6M396.0,309.7L401.1,301.6M396.0,314.8L404.3,301.6M396.0,319.9L407.5,301.6M396.0,325.0L410.6,301.6M396.0,330.1L413.8,301.6M396.0,335.2L417.0,301.6M396.0,340.3L420.2,301.6M396.0,345.4L423.4,301.6M396.0,350.5L426.6,301.6M396.0,355.6L429.7,301.6M396.0,360.7L432.9,301.6M396.0,365.8L436.1,301.6M396.0,370.9L439.3,301.6M396.0,376.0L442.5,301.6M399.2,376.0L445.7,301.6M402.4,376.0L448.8,301.6M405.5,376.0L452.0,301.6M408.7,376.0L455.2,301.6M411.9,376.0L458.4,301.6M415.1,376.0L461.6,301.6M418.3,376.0L464.8,301.6M421.5,376.0L467.9,301.6M424.6,376.0L471.1,301.6M427.8,376.0L474.3,301.6M431.0,376.0L477.5,301.6M434.2,376.0L480.7,301.6M437.4,376.0L483.9,301.6M440.6,376.0L487.0,301.6M443.7,376.0L490.2,301.6M446.9,376.0L493.4,301.6M450.1,376.0L496.6,301.6M453.3,376.0L499.8,301.6M456.5,376.0L503.0,301.6M459.7,376.0L506.1,301.6M462.8,376.0L509.3,301.6M466.0,376.0L512.5,301.6M469.2,376.0L512.5,306.7M472.4,376.0L512.5,311.8M475.6,376.0L512.5,316.9M478.8,376.0L512.5,322.0M481.9,376.0L512.5,327.1M485.1,376.0L512.5,332.2M488.3,376.0L512.5,337.3M491.5,376.0L512.5,342.4M494.7,376.0L512.5,347.5M497.9,376.0L512.5,352.6M501.0,376.0L512.5,357.7M504.2,376.0L512.5,362.8M507.4,376.0L512.5,367.9M510.6,376.0L512.5,373.0" fill="none" stroke="#a3cdc2" stroke-width="1.12" opacity="1"/><path d="M478.8,301.6L512.5,304.5M414.6,301.6L512.5,310.2M396.0,305.6L512.5,315.8M396.0,311.2L512.5,321.4M396.0,316.8L512.5,327.0M396.0,322.5L512.5,332.7M396.0,328.1L512.5,338.3M396.0,333.7L512.5,343.9M396.0,339.3L512.5,349.5M396.0,344.9L512.5,355.1M396.0,350.6L512.5,360.8M396.0,356.2L512.5,366.4M396.0,361.8L512.5,372.0M396.0,367.4L493.9,376.0M396.0,373.1L429.7,376.0" fill="none" stroke="#081a1a" stroke-width="1.6" opacity="0.6"/><path d="M439.5,312.0L470.0,306.8L496.0,304.6L497.0,309.7L486.0,314.5L480.0,324.1L457.0,328.3Z" fill="#bfe9e4" opacity="0.6"/></g>
<clipPath id="c4"><path d="M500.0,303.8C504.8,303.8 521.3,303.1 528.5,303.6C535.7,304.1 537.8,304.6 543.0,307.0C548.2,309.4 553.9,313.3 560.0,318.0C566.1,322.7 576.0,329.7 579.5,335.0C583.0,340.3 580.8,347.2 581.0,349.6C577.5,350.0 571.4,350.4 560.0,352.0C548.6,353.6 520.4,357.8 512.5,359.0C511.4,354.2 508.1,339.2 506.0,330.0C503.9,320.8 501.0,308.2 500.0,303.8Z"/></clipPath><path d="M500.0,303.8C504.8,303.8 521.3,303.1 528.5,303.6C535.7,304.1 537.8,304.6 543.0,307.0C548.2,309.4 553.9,313.3 560.0,318.0C566.1,322.7 576.0,329.7 579.5,335.0C583.0,340.3 580.8,347.2 581.0,349.6C577.5,350.0 571.4,350.4 560.0,352.0C548.6,353.6 520.4,357.8 512.5,359.0C511.4,354.2 508.1,339.2 506.0,330.0C503.9,320.8 501.0,308.2 500.0,303.8Z" fill="#081a1a"/><g clip-path="url(#c4)"><path d="M498.0,302.5L498.6,301.6M498.0,307.6L501.8,301.6M498.0,312.7L504.9,301.6M498.0,317.8L508.1,301.6M498.0,322.9L511.3,301.6M498.0,328.0L514.5,301.6M498.0,333.1L517.7,301.6M498.0,338.2L520.9,301.6M498.0,343.3L524.0,301.6M498.0,348.4L527.2,301.6M498.0,353.5L530.4,301.6M498.0,358.6L533.6,301.6M499.7,361.0L536.8,301.6M502.8,361.0L540.0,301.6M506.0,361.0L543.1,301.6M509.2,361.0L546.3,301.6M512.4,361.0L549.5,301.6M515.6,361.0L552.7,301.6M518.8,361.0L555.9,301.6M521.9,361.0L559.1,301.6M525.1,361.0L562.2,301.6M528.3,361.0L565.4,301.6M531.5,361.0L568.6,301.6M534.7,361.0L571.8,301.6M537.9,361.0L575.0,301.6M541.0,361.0L578.2,301.6M544.2,361.0L581.3,301.6M547.4,361.0L583.0,304.0M550.6,361.0L583.0,309.1M553.8,361.0L583.0,314.2M557.0,361.0L583.0,319.3M560.1,361.0L583.0,324.4M563.3,361.0L583.0,329.5M566.5,361.0L583.0,334.6M569.7,361.0L583.0,339.7M572.9,361.0L583.0,344.8M576.1,361.0L583.0,349.9M579.2,361.0L583.0,355.0M582.4,361.0L583.0,360.1" fill="none" stroke="#a3cdc2" stroke-width="1.12" opacity="1"/><path d="M522.3,301.6L583.0,306.9M498.0,305.1L583.0,312.5M498.0,310.7L583.0,318.2M498.0,316.3L583.0,323.8M498.0,322.0L583.0,329.4M498.0,327.6L583.0,335.0M498.0,333.2L583.0,340.6M498.0,338.8L583.0,346.3M498.0,344.4L583.0,351.9M498.0,350.1L583.0,357.5M498.0,355.7L558.7,361.0" fill="none" stroke="#081a1a" stroke-width="1.6" opacity="0.6"/><path d="M504.9,305.6L541.6,308.4L560.0,320.2L564.0,324.3L510.4,325.5L507.0,313.6Z" fill="#bfe9e4" opacity="0.6"/></g>
<path d="M396.5,375.5C397.8,372.7 401.5,364.4 404.3,358.8C407.1,353.2 410.0,347.8 413.5,341.7C417.0,335.6 421.9,327.2 425.4,322.0C428.9,316.8 431.3,312.9 434.6,310.2C437.9,307.5 439.1,306.6 445.0,305.6C450.9,304.6 461.6,304.8 470.0,304.3C478.4,303.8 485.9,303.0 495.7,302.7C505.4,302.4 520.4,302.0 528.5,302.5C536.6,303.0 538.5,303.2 544.2,305.6C549.9,308.0 556.6,311.8 562.8,316.6C569.0,321.4 577.8,330.3 581.2,334.6C584.6,338.9 583.0,339.9 583.2,342.5C583.4,345.1 582.6,348.8 582.5,350.0" fill="none" stroke="#141a1a" stroke-width="2.6" stroke-linecap="round"/>
<path d="M496.6,302.5L503.0,302.5L512.6,359.0L507.8,359.6Z" fill="#141a1a"/>
<clipPath id="c5"><path d="M409.6,355.2L446.4,352.2L450.3,358.8L451.0,369.0L430.0,372.0L405.0,375.5Z"/></clipPath><path d="M409.6,355.2L446.4,352.2L450.3,358.8L451.0,369.0L430.0,372.0L405.0,375.5Z" fill="#21333b"/><g clip-path="url(#c5)"><path d="M403.0,352.3L405.0,350.2M403.0,355.2L407.8,350.2M403.0,358.1L410.6,350.2M403.0,360.9L413.4,350.2M403.0,363.8L416.2,350.2M403.0,366.7L418.9,350.2M403.0,369.6L421.7,350.2M403.0,372.5L424.5,350.2M403.0,375.3L427.3,350.2M403.7,377.5L430.1,350.2M406.5,377.5L432.8,350.2M409.3,377.5L435.6,350.2M412.0,377.5L438.4,350.2M414.8,377.5L441.2,350.2M417.6,377.5L444.0,350.2M420.4,377.5L446.7,350.2M423.2,377.5L449.5,350.2M425.9,377.5L452.3,350.2M428.7,377.5L453.0,352.4M431.5,377.5L453.0,355.2M434.3,377.5L453.0,358.1M437.1,377.5L453.0,361.0M439.8,377.5L453.0,363.9M442.6,377.5L453.0,366.8M445.4,377.5L453.0,369.6M448.2,377.5L453.0,372.5M451.0,377.5L453.0,375.4" fill="none" stroke="#5b737d" stroke-width="1.0" opacity="1"/></g><path d="M409.6,355.2L446.4,352.2L450.3,358.8L451.0,369.0L430.0,372.0L405.0,375.5Z" fill="none" stroke="#16232a" stroke-width="1"/>
</g>
<g id="front">
<clipPath id="c6"><path d="M49.7,415.8L65.5,421.0L62.8,443.3L46.4,436.1Z"/></clipPath><path d="M49.7,415.8L65.5,421.0L62.8,443.3L46.4,436.1Z" fill="#ecefe9"/><g clip-path="url(#c6)"><path d="M44.4,419.2L46.4,413.8M44.4,426.2L48.9,413.8M44.4,433.2L51.5,413.8M44.4,440.2L54.0,413.8M45.1,445.3L56.6,413.8M47.7,445.3L59.1,413.8M50.2,445.3L61.7,413.8M52.8,445.3L64.2,413.8M55.3,445.3L66.8,413.8M57.9,445.3L67.5,418.9M60.4,445.3L67.5,425.9M63.0,445.3L67.5,432.9M65.5,445.3L67.5,439.9" fill="none" stroke="#b4bab4" stroke-width="0.7" opacity="1"/></g><path d="M49.7,415.8L65.5,421.0L62.8,443.3L46.4,436.1Z" fill="none" stroke="#1c2226" stroke-width="0.9"/>
<clipPath id="c7"><path d="M65.5,423.6C69.2,424.4 78.8,426.3 87.8,428.2C96.8,430.1 113.8,432.9 119.3,434.8C124.8,436.7 120.4,438.6 120.6,439.4C120.2,443.3 118.4,459.1 118.0,463.0C112.1,461.7 91.6,457.6 82.5,455.2C73.4,452.8 66.7,449.7 63.5,448.6C63.8,444.4 65.2,427.8 65.5,423.6Z"/></clipPath><path d="M65.5,423.6C69.2,424.4 78.8,426.3 87.8,428.2C96.8,430.1 113.8,432.9 119.3,434.8C124.8,436.7 120.4,438.6 120.6,439.4C120.2,443.3 118.4,459.1 118.0,463.0C112.1,461.7 91.6,457.6 82.5,455.2C73.4,452.8 66.7,449.7 63.5,448.6C63.8,444.4 65.2,427.8 65.5,423.6Z" fill="#0b0d0b"/><g clip-path="url(#c7)"><path d="M61.5,423.7L63.3,421.6M61.5,427.4L66.4,421.6M61.5,431.2L69.5,421.6M61.5,434.9L72.7,421.6M61.5,438.6L75.8,421.6M61.5,442.4L78.9,421.6M61.5,446.1L82.1,421.6M61.5,449.8L85.2,421.6M61.5,453.6L88.3,421.6M61.5,457.3L91.5,421.6M61.5,461.0L94.6,421.6M61.5,464.8L97.7,421.6M64.4,465.0L100.9,421.6M67.6,465.0L104.0,421.6M70.7,465.0L107.1,421.6M73.8,465.0L110.3,421.6M77.0,465.0L113.4,421.6M80.1,465.0L116.5,421.6M83.2,465.0L119.7,421.6M86.4,465.0L122.6,421.8M89.5,465.0L122.6,425.6M92.6,465.0L122.6,429.3M95.8,465.0L122.6,433.0M98.9,465.0L122.6,436.8M102.0,465.0L122.6,440.5M105.2,465.0L122.6,444.2M108.3,465.0L122.6,448.0M111.4,465.0L122.6,451.7M114.6,465.0L122.6,455.4M117.7,465.0L122.6,459.2M120.8,465.0L122.6,462.9" fill="none" stroke="#33382f" stroke-width="0.8" opacity="1"/></g>
<clipPath id="c8"><path d="M129.1,460.5C129.5,458.1 130.7,449.6 131.5,446.0C132.3,442.4 132.2,440.4 133.9,438.8C135.6,437.2 132.8,436.3 141.8,436.5C150.8,436.7 176.2,438.8 187.9,440.2C199.6,441.6 206.8,443.3 212.1,445.0C217.3,446.7 217.0,447.0 219.4,450.5C221.8,454.0 225.5,463.4 226.7,466.0C223.0,466.3 214.5,468.2 204.8,468.0C195.1,467.8 181.1,466.2 168.5,465.0C155.9,463.8 135.7,461.2 129.1,460.5Z"/></clipPath><path d="M129.1,460.5C129.5,458.1 130.7,449.6 131.5,446.0C132.3,442.4 132.2,440.4 133.9,438.8C135.6,437.2 132.8,436.3 141.8,436.5C150.8,436.7 176.2,438.8 187.9,440.2C199.6,441.6 206.8,443.3 212.1,445.0C217.3,446.7 217.0,447.0 219.4,450.5C221.8,454.0 225.5,463.4 226.7,466.0C223.0,466.3 214.5,468.2 204.8,468.0C195.1,467.8 181.1,466.2 168.5,465.0C155.9,463.8 135.7,461.2 129.1,460.5Z" fill="#ecefe9"/><g clip-path="url(#c8)"><path d="M127.1,437.4L128.2,434.5M127.1,444.5L130.7,434.5M127.1,451.5L133.3,434.5M127.1,458.5L135.8,434.5M127.1,465.5L138.4,434.5M128.0,470.0L140.9,434.5M130.6,470.0L143.5,434.5M133.1,470.0L146.1,434.5M135.7,470.0L148.6,434.5M138.2,470.0L151.2,434.5M140.8,470.0L153.7,434.5M143.3,470.0L156.3,434.5M145.9,470.0L158.8,434.5M148.5,470.0L161.4,434.5M151.0,470.0L163.9,434.5M153.6,470.0L166.5,434.5M156.1,470.0L169.0,434.5M158.7,470.0L171.6,434.5M161.2,470.0L174.1,434.5M163.8,470.0L176.7,434.5M166.3,470.0L179.3,434.5M168.9,470.0L181.8,434.5M171.4,470.0L184.4,434.5M174.0,470.0L186.9,434.5M176.5,470.0L189.5,434.5M179.1,470.0L192.0,434.5M181.7,470.0L194.6,434.5M184.2,470.0L197.1,434.5M186.8,470.0L199.7,434.5M189.3,470.0L202.2,434.5M191.9,470.0L204.8,434.5M194.4,470.0L207.3,434.5M197.0,470.0L209.9,434.5M199.5,470.0L212.5,434.5M202.1,470.0L215.0,434.5M204.6,470.0L217.6,434.5M207.2,470.0L220.1,434.5M209.7,470.0L222.7,434.5M212.3,470.0L225.2,434.5M214.9,470.0L227.8,434.5M217.4,470.0L228.7,439.0M220.0,470.0L228.7,446.0M222.5,470.0L228.7,453.0M225.1,470.0L228.7,460.0M227.6,470.0L228.7,467.1" fill="none" stroke="#b4bab4" stroke-width="0.7" opacity="1"/></g><path d="M129.1,460.5C129.5,458.1 130.7,449.6 131.5,446.0C132.3,442.4 132.2,440.4 133.9,438.8C135.6,437.2 132.8,436.3 141.8,436.5C150.8,436.7 176.2,438.8 187.9,440.2C199.6,441.6 206.8,443.3 212.1,445.0C217.3,446.7 217.0,447.0 219.4,450.5C221.8,454.0 225.5,463.4 226.7,466.0C223.0,466.3 214.5,468.2 204.8,468.0C195.1,467.8 181.1,466.2 168.5,465.0C155.9,463.8 135.7,461.2 129.1,460.5Z" fill="none" stroke="#1c2226" stroke-width="1"/>
<clipPath id="c9"><path d="M48.2,481.0L62.0,479.7L62.0,498.0L94.2,507.3L94.2,498.0L112.0,496.0L117.2,499.4L117.2,524.0L85.7,517.0L59.4,506.5L39.7,491.5Z"/></clipPath><path d="M48.2,481.0L62.0,479.7L62.0,498.0L94.2,507.3L94.2,498.0L112.0,496.0L117.2,499.4L117.2,524.0L85.7,517.0L59.4,506.5L39.7,491.5Z" fill="#0b0d0b"/><g clip-path="url(#c9)"><path d="M37.7,479.5L39.2,477.7M37.7,483.2L42.3,477.7M37.7,486.9L45.5,477.7M37.7,490.7L48.6,477.7M37.7,494.4L51.7,477.7M37.7,498.1L54.9,477.7M37.7,501.9L58.0,477.7M37.7,505.6L61.1,477.7M37.7,509.3L64.3,477.7M37.7,513.1L67.4,477.7M37.7,516.8L70.5,477.7M37.7,520.5L73.7,477.7M37.7,524.3L76.8,477.7M39.4,526.0L79.9,477.7M42.5,526.0L83.0,477.7M45.7,526.0L86.2,477.7M48.8,526.0L89.3,477.7M51.9,526.0L92.4,477.7M55.1,526.0L95.6,477.7M58.2,526.0L98.7,477.7M61.3,526.0L101.8,477.7M64.5,526.0L105.0,477.7M67.6,526.0L108.1,477.7M70.7,526.0L111.2,477.7M73.9,526.0L114.4,477.7M77.0,526.0L117.5,477.7M80.1,526.0L119.2,479.4M83.2,526.0L119.2,483.2M86.4,526.0L119.2,486.9M89.5,526.0L119.2,490.6M92.6,526.0L119.2,494.4M95.8,526.0L119.2,498.1M98.9,526.0L119.2,501.8M102.0,526.0L119.2,505.6M105.2,526.0L119.2,509.3M108.3,526.0L119.2,513.0M111.4,526.0L119.2,516.8M114.6,526.0L119.2,520.5M117.7,526.0L119.2,524.2" fill="none" stroke="#33382f" stroke-width="0.8" opacity="1"/></g>
<clipPath id="c10"><path d="M62.0,469.8L94.2,476.4L94.2,506.6L62.0,497.4Z"/></clipPath><path d="M62.0,469.8L94.2,476.4L94.2,506.6L62.0,497.4Z" fill="#e6e9e5"/><g clip-path="url(#c10)"><path d="M60.0,468.7L60.6,467.8M60.0,473.3L63.8,467.8M60.0,477.8L67.0,467.8M60.0,482.3L70.2,467.8M60.0,486.9L73.3,467.8M60.0,491.4L76.5,467.8M60.0,495.9L79.7,467.8M60.0,500.5L82.9,467.8M60.0,505.0L86.0,467.8M60.6,508.6L89.2,467.8M63.8,508.6L92.4,467.8M67.0,508.6L95.6,467.8M70.2,508.6L96.2,471.4M73.3,508.6L96.2,475.9M76.5,508.6L96.2,480.5M79.7,508.6L96.2,485.0M82.9,508.6L96.2,489.5M86.0,508.6L96.2,494.1M89.2,508.6L96.2,498.6M92.4,508.6L96.2,503.1M95.6,508.6L96.2,507.7" fill="none" stroke="#a3aaa5" stroke-width="0.75" opacity="1"/></g>
<path d="M39.7,488.2C40.8,489.8 43.2,494.8 46.5,498.0C49.8,501.2 52.9,503.8 59.4,507.3C65.9,510.8 76.9,515.7 85.7,519.0C94.5,522.3 101.3,524.6 112.0,527.0C122.7,529.4 138.6,532.1 150.0,533.5C161.4,534.9 165.6,535.5 180.6,535.5C195.6,535.5 230.1,533.8 240.0,533.5L240.0,540.0C230.1,540.3 195.6,541.8 180.6,542.0C165.6,542.2 157.1,541.6 150.0,541.3C142.9,540.9 144.5,540.8 138.2,539.9C131.8,539.0 120.7,537.9 111.9,536.0C103.2,534.1 94.5,531.8 85.7,528.8C77.0,525.8 66.0,521.4 59.4,518.3C52.8,515.2 50.9,514.1 46.3,510.4C41.7,506.7 34.4,498.5 32.0,496.1Z" fill="#242925" stroke="#111411" stroke-width="0.9"/>
<g fill="none" stroke="#15191a" stroke-width="1.1">
<path d="M147.3,437.1C147.5,438.6 148.0,443.4 148.5,446.0C149.0,448.6 149.4,450.9 150.3,452.9C151.2,454.9 152.6,456.7 154.0,458.0C155.4,459.3 157.0,460.9 158.8,460.8C160.6,460.8 163.6,459.8 164.8,457.7C166.0,455.6 165.9,451.0 166.0,448.0C166.1,445.0 165.6,440.9 165.5,439.5"/>
<path d="M172.1,440.2C172.2,441.8 172.4,446.9 173.0,450.0C173.6,453.1 174.7,456.5 175.8,459.0C176.9,461.5 178.8,464.0 179.4,465.0"/>
<path d="M178.2,440.8C178.3,442.0 178.4,445.6 178.8,448.0C179.2,450.4 179.3,452.5 180.6,455.3C181.9,458.1 185.7,463.4 186.7,465.0"/>
<path d="M191.5,440.8C191.2,442.2 190.6,446.6 190.0,449.0C189.4,451.4 188.5,452.3 187.9,455.3C187.3,458.3 186.9,465.1 186.7,467.0"/>
</g>
<path d="M163.6,439.5C164.4,438.4 169.8,437.9 170.9,439.5C172.1,441.1 170.9,446.2 170.5,449.0C170.1,451.8 169.8,454.4 168.5,456.5C167.2,458.6 163.8,460.8 162.4,461.4C161.0,462.0 159.6,461.4 160.0,460.2C160.4,459.0 163.8,456.4 164.8,454.0C165.8,451.6 166.2,448.4 166.0,446.0C165.8,443.6 162.8,440.6 163.6,439.5Z" fill="#2a2f2c"/>
<path d="M141.0,510.5L145.5,511.0L146.0,522.5L141.8,521.5Z" fill="#161a18"/>
<path d="M147.2,511.5L149.8,511.8L150.0,521.0L147.8,520.5Z" fill="#161a18"/>
<path d="M152.0,524.5C154.2,524.9 160.2,526.3 165.0,527.0C169.8,527.7 178.3,528.2 181.0,528.5" fill="none" stroke="#161a18" stroke-width="1.6"/>
<path d="M44.5,486.0L46.5,485.5L48.5,497.0L46.3,497.5Z" fill="#161a18"/>
</g>
<path d="M501.0,381.5C502.3,380.3 507.2,379.7 510.0,379.5C512.8,379.3 516.6,379.6 518.0,380.5C519.4,381.4 519.8,383.9 518.5,385.0C517.2,386.1 512.8,386.6 510.0,386.8C507.2,387.1 503.5,387.4 502.0,386.5C500.5,385.6 499.7,382.7 501.0,381.5Z" fill="none" stroke="#101c22" stroke-width="1.1" stroke-dasharray="2 1"/>
<path d="M353.4,447.0L369.5,446.3L370.5,452.0L354.0,453.3Z" fill="#b9c0bd"/>
<path d="M405.0,447.2L420.6,446.3L421.0,450.6L405.4,451.6Z" fill="#b9c0bd"/>
<path d="M615.0,407.5C617.2,406.5 623.5,403.7 628.0,401.5C632.5,399.3 639.4,395.7 641.7,394.5" fill="none" stroke="#15191a" stroke-width="3.2" stroke-linecap="round"/>
<path d="M637.5,365.0C638.2,365.8 640.9,367.5 641.6,369.5C642.3,371.5 642.3,374.8 641.8,377.0C641.3,379.2 639.0,382.0 638.5,383.0" fill="#dfe3e0" stroke="#20282c" stroke-width="1"/>
<g id="rear-wheel">
<clipPath id="c11"><path d="M541.0,475.0L562.0,470.0L572.0,489.5L562.0,488.5L553.6,486.0L544.2,481.0Z"/></clipPath><path d="M541.0,475.0L562.0,470.0L572.0,489.5L562.0,488.5L553.6,486.0L544.2,481.0Z" fill="#0f120f"/><g clip-path="url(#c11)"><path d="M539.0,470.7L541.3,468.0M539.0,474.5L544.4,468.0M539.0,478.2L547.6,468.0M539.0,481.9L550.7,468.0M539.0,485.7L553.8,468.0M539.0,489.4L557.0,468.0M540.4,491.5L560.1,468.0M543.5,491.5L563.2,468.0M546.6,491.5L566.4,468.0M549.8,491.5L569.5,468.0M552.9,491.5L572.6,468.0M556.0,491.5L574.0,470.1M559.2,491.5L574.0,473.8M562.3,491.5L574.0,477.6M565.4,491.5L574.0,481.3M568.6,491.5L574.0,485.0M571.7,491.5L574.0,488.8" fill="none" stroke="#3a3f38" stroke-width="0.8" opacity="1"/></g>
<path d="M577.2,400.5C579.8,400.2 588.3,398.6 593.0,398.7C597.7,398.8 602.1,397.8 605.5,401.2C608.9,404.6 611.9,412.3 613.4,419.3C614.9,426.3 614.9,435.9 614.4,443.0C613.9,450.1 612.6,456.0 610.3,461.8C608.0,467.6 604.5,473.1 600.8,477.6C597.1,482.1 592.7,487.0 588.2,488.6C583.7,490.2 578.1,488.8 574.0,487.0C569.9,485.2 566.0,482.3 563.8,477.6C561.5,472.9 560.9,465.8 560.5,458.7C560.1,451.6 560.1,441.8 561.3,435.0C562.5,428.2 565.4,423.0 567.8,417.8C570.2,412.6 574.0,406.5 575.6,403.6C577.2,400.7 576.9,401.0 577.2,400.5Z" fill="#1a1e1a"/>
</g>
<g id="front-wheel">
<clipPath id="c12"><path d="M326.0,443.0C326.5,439.3 335.7,451.8 339.0,458.0C342.3,464.2 344.6,473.0 346.0,480.0C347.4,487.0 347.6,493.5 347.5,500.0C347.4,506.5 347.4,515.3 345.5,519.0C343.6,522.7 337.6,528.5 336.0,522.0C334.4,515.5 337.7,493.2 336.0,480.0C334.3,466.8 325.5,446.7 326.0,443.0Z"/></clipPath><path d="M326.0,443.0C326.5,439.3 335.7,451.8 339.0,458.0C342.3,464.2 344.6,473.0 346.0,480.0C347.4,487.0 347.6,493.5 347.5,500.0C347.4,506.5 347.4,515.3 345.5,519.0C343.6,522.7 337.6,528.5 336.0,522.0C334.4,515.5 337.7,493.2 336.0,480.0C334.3,466.8 325.5,446.7 326.0,443.0Z" fill="#0f120f"/><g clip-path="url(#c12)"><path d="M324.0,441.7L324.6,441.0M324.0,445.4L327.7,441.0M324.0,449.2L330.8,441.0M324.0,452.9L334.0,441.0M324.0,456.6L337.1,441.0M324.0,460.4L340.2,441.0M324.0,464.1L343.4,441.0M324.0,467.8L346.5,441.0M324.0,471.6L349.5,441.2M324.0,475.3L349.5,444.9M324.0,479.0L349.5,448.6M324.0,482.8L349.5,452.4M324.0,486.5L349.5,456.1M324.0,490.2L349.5,459.8M324.0,494.0L349.5,463.6M324.0,497.7L349.5,467.3M324.0,501.4L349.5,471.0M324.0,505.2L349.5,474.8M324.0,508.9L349.5,478.5M324.0,512.6L349.5,482.2M324.0,516.4L349.5,486.0M324.0,520.1L349.5,489.7M324.0,523.8L349.5,493.4M327.0,524.0L349.5,497.2M330.1,524.0L349.5,500.9M333.3,524.0L349.5,504.6M336.4,524.0L349.5,508.4M339.5,524.0L349.5,512.1M342.7,524.0L349.5,515.8M345.8,524.0L349.5,519.6M348.9,524.0L349.5,523.3" fill="none" stroke="#333a38" stroke-width="0.8" opacity="1"/></g>
<path d="M240.4,502.1C240.7,494.8 241.2,486.8 243.2,480.1C245.2,473.4 247.7,467.9 252.3,461.7C256.9,455.5 263.2,447.5 270.9,443.2C278.6,438.9 290.1,435.9 298.4,435.6C306.7,435.3 314.4,437.4 320.5,441.5C326.6,445.6 331.7,452.5 335.2,459.9C338.7,467.2 340.8,477.7 341.6,485.6C342.4,493.6 341.5,500.2 339.8,507.6C338.1,515.0 335.3,523.3 331.5,529.7C327.7,536.1 321.7,541.9 316.8,546.2C311.9,550.5 307.3,553.5 302.1,555.4C296.9,557.3 291.4,557.7 285.6,557.4C279.8,557.1 273.3,556.0 267.2,553.5C261.1,551.0 253.2,547.4 248.9,542.5C244.6,537.6 242.7,530.9 241.3,524.2C239.9,517.5 240.1,509.5 240.4,502.1Z" fill="#1a1e1a"/>
</g>
<g id="front-rim">
<ellipse cx="294" cy="496" rx="42" ry="54.5" transform="rotate(7 294 496)" fill="none" stroke="#3b413c" stroke-width="1.3"/>
<ellipse cx="291" cy="497" rx="46.5" ry="58" transform="rotate(7 291 497)" fill="none" stroke="#343a35" stroke-width="1.1"/>
<clipPath id="c13"><ellipse cx="297.6" cy="493.6" rx="31.6" ry="43.4" transform="rotate(7.4 297.6 493.6)"/></clipPath>
<ellipse cx="297.6" cy="493.6" rx="34.8" ry="46.6" transform="rotate(7.4 297.6 493.6)" fill="#c9cec9" stroke="#8d948f" stroke-width="0.8"/>
<ellipse cx="297.6" cy="493.6" rx="28.4" ry="40.2" transform="rotate(7.4 297.6 493.6)" fill="#171b18"/>
<g clip-path="url(#c13)" stroke="#c9cec9" stroke-width="5.8">
<line x1="293" y1="495.1" x2="283.6" y2="449.7"/>
<line x1="293" y1="495.1" x2="305.4" y2="447.0"/>
<line x1="293" y1="495.1" x2="324.2" y2="462.1"/>
<line x1="293" y1="495.1" x2="333.6" y2="490.5"/>
<line x1="293" y1="495.1" x2="322.4" y2="520.6"/>
<line x1="293" y1="495.1" x2="301.5" y2="539.5"/>
<line x1="293" y1="495.1" x2="284.6" y2="539.5"/>
<line x1="293" y1="495.1" x2="267.6" y2="526.2"/>
<line x1="293" y1="495.1" x2="260.5" y2="501.7"/>
<line x1="293" y1="495.1" x2="267.6" y2="471.6"/>
</g>
<circle cx="293" cy="495.1" r="9.5" fill="#c9cec9"/>
<circle cx="293.0" cy="501.0" r="1.1" fill="#2a2e2a"/>
<circle cx="288.5" cy="496.9" r="1.1" fill="#2a2e2a"/>
<circle cx="290.2" cy="490.3" r="1.1" fill="#2a2e2a"/>
<circle cx="295.8" cy="490.3" r="1.1" fill="#2a2e2a"/>
<circle cx="297.5" cy="496.9" r="1.1" fill="#2a2e2a"/>
<circle cx="293" cy="495.1" r="2.5" fill="#2a2e2a"/>
</g>
<g id="rear-rim">
<ellipse cx="589.5" cy="443.7" rx="23" ry="40" transform="rotate(5 589.5 443.7)" fill="none" stroke="#3b413c" stroke-width="1.1"/>
<clipPath id="c14"><ellipse cx="591.3" cy="443.7" rx="16.9" ry="32.5" transform="rotate(4.6 591.3 443.7)"/></clipPath>
<ellipse cx="591.3" cy="443.7" rx="19.2" ry="34.8" transform="rotate(4.6 591.3 443.7)" fill="#c9cec9" stroke="#8d948f" stroke-width="0.8"/>
<ellipse cx="591.3" cy="443.7" rx="14.7" ry="30.3" transform="rotate(4.6 591.3 443.7)" fill="#171b18"/>
<g clip-path="url(#c14)" stroke="#c9cec9" stroke-width="4.1">
<line x1="586.5" y1="443" x2="582.1" y2="408.6"/>
<line x1="586.5" y1="443" x2="592.5" y2="405.0"/>
<line x1="586.5" y1="443" x2="602.9" y2="416.4"/>
<line x1="586.5" y1="443" x2="609.8" y2="433.6"/>
<line x1="586.5" y1="443" x2="608.0" y2="445.5"/>
<line x1="586.5" y1="443" x2="599.4" y2="469.8"/>
<line x1="586.5" y1="443" x2="587.4" y2="480.0"/>
<line x1="586.5" y1="443" x2="577.9" y2="473.1"/>
<line x1="586.5" y1="443" x2="572.8" y2="457.6"/>
<line x1="586.5" y1="443" x2="571.9" y2="433.6"/>
<line x1="586.5" y1="443" x2="575.2" y2="418.0"/>
</g>
<circle cx="586.5" cy="443" r="6.2" fill="#c9cec9"/>
<circle cx="586.5" cy="443" r="1.6" fill="#2a2e2a"/>
</g>
</svg>
</body>
</html>
